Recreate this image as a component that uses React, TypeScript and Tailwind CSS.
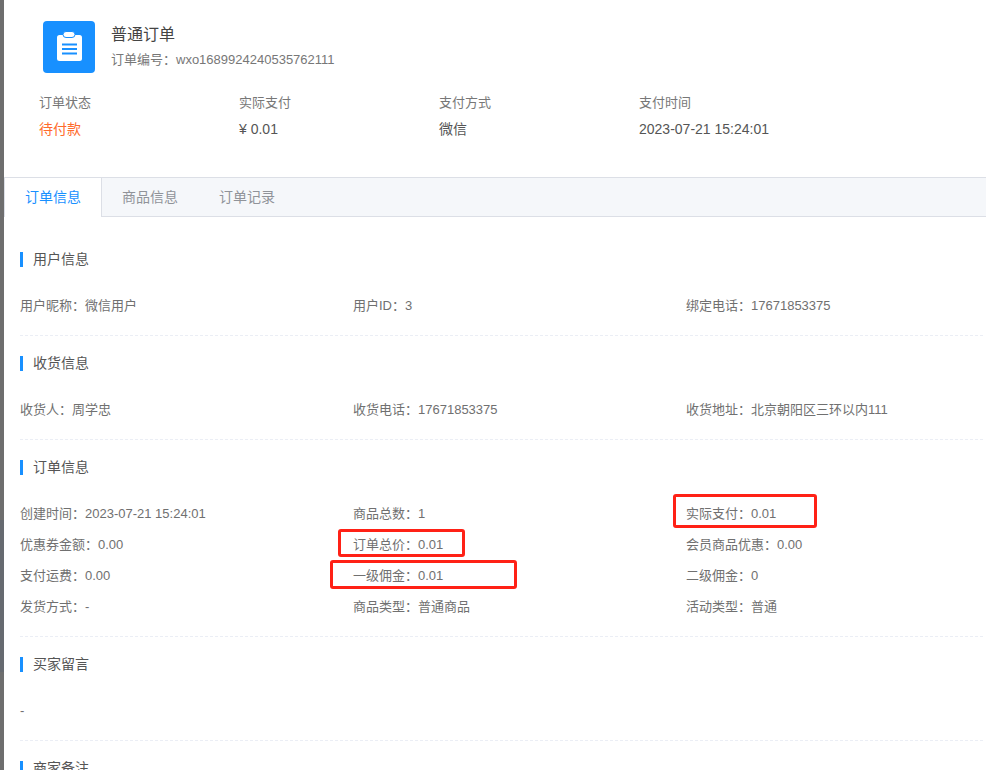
const FONT = 'font-["Liberation_Sans","Noto_Sans_CJK_SC",sans-serif]'

const stats = [
  { label: '订单状态', value: '待付款', orange: true },
  { label: '实际支付', value: '¥ 0.01' },
  { label: '支付方式', value: '微信' },
  { label: '支付时间', value: '2023-07-21 15:24:01' },
]

const sections = [
  {
    title: '用户信息',
    items: ['用户昵称：微信用户', '用户ID：3', '绑定电话：17671853375'],
  },
  {
    title: '收货信息',
    items: ['收货人：周学忠', '收货电话：17671853375', '收货地址：北京朝阳区三环以内111'],
  },
  {
    title: '订单信息',
    items: [
      '创建时间：2023-07-21 15:24:01',
      '商品总数：1',
      '实际支付：0.01',
      '优惠券金额：0.00',
      '订单总价：0.01',
      '会员商品优惠：0.00',
      '支付运费：0.00',
      '一级佣金：0.01',
      '二级佣金：0',
      '发货方式：-',
      '商品类型：普通商品',
      '活动类型：普通',
    ],
  },
  { title: '买家留言', items: ['-'] },
]

function SectionTitle({ title }: { title: string }) {
  return (
    <div className="flex h-[15px] items-center">
      <span className="h-[15px] w-[3px] bg-[#1890ff]" />
      <span className="ml-[10px] text-[14px] leading-[15px] text-[#555]">{title}</span>
    </div>
  )
}

export default function App() {
  return (
    <div className={`relative flex h-[770px] w-[986px] overflow-hidden bg-white ${FONT}`}>
      <div className="flex w-[4px] shrink-0 flex-col bg-[#6e6e6e]">
        <div className="h-[520px]" />
        <div className="h-[152px] bg-[#666a70]" />
      </div>

      <div className="min-w-0 flex-1">
        <div className="h-[177px] pl-[35px] pt-[21px]">
          <div className="flex items-center gap-4 pl-[4px]">
            <div className="h-[52px] w-[52px] rounded bg-[#1890ff]">
              <svg viewBox="0 0 52 52" className="h-[52px] w-[52px]">
                <rect x="14" y="14" width="25" height="26" rx="2.5" fill="#fff" />
                <rect x="20" y="10.5" width="12" height="6" rx="3" fill="#fff" stroke="#1890ff" strokeWidth="1" />
                <path d="M19 23.5h15M19 28h15M19 32.5h15" stroke="#1890ff" strokeWidth="2" />
              </svg>
            </div>
            <div className="-mt-[2px]">
              <div className="text-[16px] leading-[24px] text-[#444]">普通订单</div>
              <div className="mt-[3px] text-[13px] leading-[20px] text-[#777]">订单编号：wxo1689924240535762111</div>
            </div>
          </div>
          <div className="mt-[20px] flex">
            {stats.map((s) => (
              <div key={s.label} className="w-[200px]">
                <div className="text-[13px] leading-[20px] text-[#777]">{s.label}</div>
                <div className={`mt-[6px] text-[14px] leading-[20px] ${s.orange ? 'text-[#ff6b2c]' : 'text-[#555]'}`}>
                  {s.value}
                </div>
              </div>
            ))}
          </div>
        </div>

        <div className="flex h-[40px] border-y border-[#dcdfe6] bg-[#f5f7fa] text-[14px] leading-[38px] text-[#909399]">
          <div className="mb-[-1px] h-[39px] border-r border-l border-[#dcdfe6] bg-white px-5 text-[#1890ff]">订单信息</div>
          <div className="px-5">商品信息</div>
          <div className="ml-[1px] px-5">订单记录</div>
        </div>

        <div className="pl-[16px] pt-[35px]">
          {sections.map((sec) => (
            <div key={sec.title} className="mb-[20px] w-[963px] border-b border-dashed border-[#ebeef5] pb-[14px]">
              <SectionTitle title={sec.title} />
              <div className="mt-[23px] grid grid-cols-[333px_333px_1fr] text-[13px] leading-[31px] text-[#707070]">
                {sec.items.map((item) => (
                  <div key={item}>{item}</div>
                ))}
              </div>
            </div>
          ))}
          <SectionTitle title="商家备注" />
        </div>
      </div>

      <div className="absolute left-[673px] top-[494px] h-[34px] w-[144px] rounded-[3px] border-[3px] border-[#ff2116]" />
      <div className="absolute left-[338px] top-[529px] h-[28px] w-[127px] rounded-[3px] border-[3px] border-[#ff2116]" />
      <div className="absolute left-[330px] top-[560px] h-[29px] w-[187px] rounded-[3px] border-[3px] border-[#ff2116]" />
    </div>
  )
}
